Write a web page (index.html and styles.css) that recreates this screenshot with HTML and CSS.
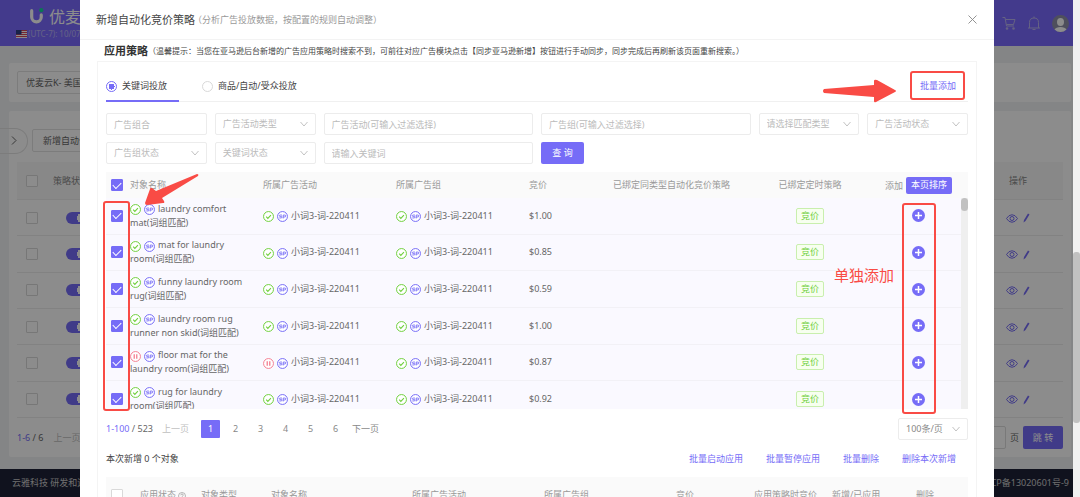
FILE: index.html
```html
<!DOCTYPE html>
<html lang="zh-CN">
<head>
<meta charset="utf-8">
<title>新增自动化竞价策略</title>
<link rel="stylesheet" href="styles.css">
</head>
<body>
<svg class="sprite" aria-hidden="true">
  <symbol id="ok" viewBox="0 0 20 20"><circle cx="10" cy="10" r="9" fill="#fff" stroke="#6fcf3c" stroke-width="1.8"/><path d="M5.8 10.2l3 3.2 5.6-6" fill="none" stroke="#6fcf3c" stroke-width="2"/></symbol>
  <symbol id="pause" viewBox="0 0 20 20"><circle cx="10" cy="10" r="9" fill="#fff" stroke="#f47f92" stroke-width="1.8"/><path d="M7.7 6v8M12.3 6v8" stroke="#f47f92" stroke-width="2.4"/></symbol>
  <symbol id="sp" viewBox="0 0 20 20"><circle cx="10" cy="10" r="9" fill="#fff" stroke="#766cf7" stroke-width="1.8"/><path d="M9 7.4H5.9q-1.6 0-1.6 1.3T6 10h1.400q1.600 0 1.600 1.300t-1.600 1.300H4.200M11.300 13.500V7.400h2.700q2 0 2 1.700t-2 1.700h-2.500" fill="none" stroke="#766cf7" stroke-width="1.700"/></symbol>
  <symbol id="plus" viewBox="0 0 26 26"><circle cx="13" cy="13" r="13" fill="#766cf7"/><path d="M13 6v14M6 13h14" stroke="#fff" stroke-width="3"/></symbol>
  <symbol id="down" viewBox="0 0 16 12"><path d="M1 2l7 8 7-8" fill="none" stroke="currentColor" stroke-width="1.800"/></symbol>
  <symbol id="eye" viewBox="0 0 24 18"><path d="M1 9q4.500-7.500 11-7.500T23 9q-4.500 7.500-11 7.500T1 9z" fill="none" stroke="currentColor" stroke-width="2"/><circle cx="12" cy="9" r="4" fill="none" stroke="currentColor" stroke-width="2"/></symbol>
  <symbol id="pen" viewBox="0 0 14 20"><path d="M10 1l3 2L5 16l-4 3 1-5z" fill="currentColor"/></symbol>
</svg>
<div class="viewport">
  <div class="page">
    <header class="topbar">
      <div class="brand">
        <div class="brand-row">
          <svg class="logo" viewBox="0 0 26 32"><path d="M3 5v12a9 9 0 0 0 18 0v-4" fill="none" stroke="#fff" stroke-width="6" stroke-linecap="round"/><circle cx="21" cy="4" r="4" fill="#14d79a"/></svg>
          <span class="brand-name">优麦云</span>
        </div>
        <div class="zone">
          <svg class="flag" viewBox="0 0 22 16"><path fill="#fff" d="M0 0h22v16H0z"/><path d="M0 1h22M0 5h22M0 9h22M0 13h22" stroke="#d8485a" stroke-width="2.400"/><path fill="#2d3f86" d="M0 0h11v9H0z"/></svg>
          <span>(UTC-7): 10/07</span>
        </div>
      </div>
      <div class="tools">
        <svg class="tool" viewBox="0 0 28 28"><path d="M1 3h5l3 17h15M7 7h19l-3 10H9" fill="none" stroke="currentColor" stroke-width="2"/><circle cx="10" cy="25" r="2.500" fill="currentColor"/><circle cx="23" cy="25" r="2.500" fill="currentColor"/></svg>
        <svg class="tool" viewBox="0 0 28 28"><path d="M14 1v3M2 24h24M5 24V13q0-9 9-9t9 9v11M11 27h6" fill="none" stroke="currentColor" stroke-width="2"/></svg>
        <svg class="avatar" viewBox="0 0 34 34"><circle cx="17" cy="17" r="17" fill="#8f91a8"/><ellipse cx="17" cy="14" rx="7" ry="8" fill="#fff"/><path d="M5 29q3-5 12-5t12 5q-5 5-12 5T5 29z" fill="#fff"/></svg>
      </div>
    </header>
    <main class="content">
      <section class="card shop"><button class="shop-select">优麦云K- 美国</button></section>
      <section class="card list">
        <div class="list-tools"><button class="handle" aria-label="展开"><svg viewBox="0 0 12 20"><path d="M2 2l8 8-8 8" fill="none" stroke="currentColor" stroke-width="2"/></svg></button><button class="plain">新增自动化策略</button></div>
        <table class="back-table">
          <thead><tr><th class="pick"><input type="checkbox" aria-label="全选策略"></th><th>策略状态</th><th class="ops">操作</th></tr></thead>
          <tbody>
            <tr><td class="pick"><input type="checkbox" aria-label="策略1"></td><td><span class="switch"></span></td><td class="ops"><svg class="eye"><use href="#eye"/></svg><svg class="pen"><use href="#pen"/></svg></td></tr>
            <tr><td class="pick"><input type="checkbox" aria-label="策略2"></td><td><span class="switch"></span></td><td class="ops"><svg class="eye"><use href="#eye"/></svg><svg class="pen"><use href="#pen"/></svg></td></tr>
            <tr><td class="pick"><input type="checkbox" aria-label="策略3"></td><td><span class="switch"></span></td><td class="ops"><svg class="eye"><use href="#eye"/></svg><svg class="pen"><use href="#pen"/></svg></td></tr>
            <tr><td class="pick"><input type="checkbox" aria-label="策略4"></td><td><span class="switch"></span></td><td class="ops"><svg class="eye"><use href="#eye"/></svg><svg class="pen"><use href="#pen"/></svg></td></tr>
            <tr><td class="pick"><input type="checkbox" aria-label="策略5"></td><td><span class="switch"></span></td><td class="ops"><svg class="eye"><use href="#eye"/></svg><svg class="pen"><use href="#pen"/></svg></td></tr>
            <tr><td class="pick"><input type="checkbox" aria-label="策略6"></td><td><span class="switch"></span></td><td class="ops"><svg class="eye"><use href="#eye"/></svg><svg class="pen"><use href="#pen"/></svg></td></tr>
          </tbody>
        </table>
        <div class="back-pager"><span><b>1-6</b> / 6</span><span class="muted">上一页</span><label class="jump"><input type="text" aria-label="页码">页</label><button class="primary jump-btn">跳 转</button></div>
      </section>
    </main>
    <footer class="foot"><span>云雅科技 研发和运营</span><span>ICP备13020601号-9</span></footer>
  </div>

  <div class="mask">
    <div class="modal" role="dialog" aria-labelledby="dlg-title">
      <header class="modal-head">
        <h1 id="dlg-title">新增自动化竞价策略</h1><span class="sub">（分析广告投放数据，按配置的规则自动调整）</span>
        <button class="close" aria-label="关闭"><svg viewBox="0 0 18 18"><path d="M1 1l16 16M17 1L1 17" stroke="currentColor" stroke-width="1.800"/></svg></button>
      </header>
      <div class="tip"><h2>应用策略</h2><span>（温馨提示：当您在亚马逊后台新增的广告应用策略时搜索不到，可前往对应广告模块点击【同步亚马逊新增】按钮进行手动同步，同步完成后再刷新该页面重新搜索。）</span></div>
      <section class="panel">
        <div class="tabs">
          <label class="tab active"><input type="radio" name="kind" checked>关键词投放</label>
          <label class="tab"><input type="radio" name="kind">商品/自动/受众投放</label>
          <button class="link batch">批量添加</button>
        </div>
        <form class="filters">
          <input class="field" type="text" placeholder="广告组合" aria-label="广告组合">
          <label class="pickbox"><select aria-label="广告活动类型"><option>广告活动类型</option></select><svg><use href="#down"/></svg></label>
          <input class="field wide" type="text" placeholder="广告活动(可输入过滤选择)" aria-label="广告活动">
          <input class="field wide" type="text" placeholder="广告组(可输入过滤选择)" aria-label="广告组">
          <label class="pickbox"><select aria-label="匹配类型"><option>请选择匹配类型</option></select><svg><use href="#down"/></svg></label>
          <label class="pickbox"><select aria-label="广告活动状态"><option>广告活动状态</option></select><svg><use href="#down"/></svg></label>
          <label class="pickbox"><select aria-label="广告组状态"><option>广告组状态</option></select><svg><use href="#down"/></svg></label>
          <label class="pickbox"><select aria-label="关键词状态"><option>关键词状态</option></select><svg><use href="#down"/></svg></label>
          <input class="field wide" type="text" placeholder="请输入关键词" aria-label="关键词">
          <button class="primary query" type="button">查 询</button>
        </form>

        <table class="grid grid-head">
          <colgroup><col class="c-pick"><col class="c-name"><col class="c-name"><col class="c-name"><col class="c-price"><col class="c-bound"><col class="c-timer"><col></colgroup>
          <thead><tr><th><input type="checkbox" checked aria-label="全选"></th><th>对象名称</th><th>所属广告活动</th><th>所属广告组</th><th>竞价</th><th>已绑定同类型自动化竞价策略</th><th class="mid">已绑定定时策略</th><th class="mid last"><span>添加</span><button class="primary sort">本页排序</button></th></tr></thead>
        </table>
        <div class="scroll">
          <table class="grid grid-body">
            <colgroup><col class="c-pick"><col class="c-name"><col class="c-name"><col class="c-name"><col class="c-price"><col class="c-bound"><col class="c-timer"><col></colgroup>
            <tbody>
              <tr><td><input type="checkbox" checked aria-label="laundry comfort mat"></td><td><svg class="ic"><use href="#ok"/></svg><svg class="ic"><use href="#sp"/></svg>laundry comfort<br>mat(词组匹配)</td><td><svg class="ic"><use href="#ok"/></svg><svg class="ic"><use href="#sp"/></svg>小词3-词-220411</td><td><svg class="ic"><use href="#ok"/></svg><svg class="ic"><use href="#sp"/></svg>小词3-词-220411</td><td>$1.00</td><td></td><td class="mid"><span class="tag">竞价</span></td><td class="mid"><button class="add" aria-label="添加"><svg><use href="#plus"/></svg></button></td></tr>
              <tr><td><input type="checkbox" checked aria-label="mat for laundry room"></td><td><svg class="ic"><use href="#ok"/></svg><svg class="ic"><use href="#sp"/></svg>mat for laundry<br>room(词组匹配)</td><td><svg class="ic"><use href="#ok"/></svg><svg class="ic"><use href="#sp"/></svg>小词3-词-220411</td><td><svg class="ic"><use href="#ok"/></svg><svg class="ic"><use href="#sp"/></svg>小词3-词-220411</td><td>$0.85</td><td></td><td class="mid"><span class="tag">竞价</span></td><td class="mid"><button class="add" aria-label="添加"><svg><use href="#plus"/></svg></button></td></tr>
              <tr><td><input type="checkbox" checked aria-label="funny laundry room rug"></td><td><svg class="ic"><use href="#ok"/></svg><svg class="ic"><use href="#sp"/></svg>funny laundry room<br>rug(词组匹配)</td><td><svg class="ic"><use href="#ok"/></svg><svg class="ic"><use href="#sp"/></svg>小词3-词-220411</td><td><svg class="ic"><use href="#ok"/></svg><svg class="ic"><use href="#sp"/></svg>小词3-词-220411</td><td>$0.59</td><td></td><td class="mid"><span class="tag">竞价</span></td><td class="mid"><button class="add" aria-label="添加"><svg><use href="#plus"/></svg></button></td></tr>
              <tr><td><input type="checkbox" checked aria-label="laundry room rug runner non skid"></td><td><svg class="ic"><use href="#ok"/></svg><svg class="ic"><use href="#sp"/></svg>laundry room rug<br>runner non skid(词组匹配)</td><td><svg class="ic"><use href="#ok"/></svg><svg class="ic"><use href="#sp"/></svg>小词3-词-220411</td><td><svg class="ic"><use href="#ok"/></svg><svg class="ic"><use href="#sp"/></svg>小词3-词-220411</td><td>$1.00</td><td></td><td class="mid"><span class="tag">竞价</span></td><td class="mid"><button class="add" aria-label="添加"><svg><use href="#plus"/></svg></button></td></tr>
              <tr><td><input type="checkbox" checked aria-label="floor mat for the laundry room"></td><td><svg class="ic"><use href="#pause"/></svg><svg class="ic"><use href="#sp"/></svg>floor mat for the<br>laundry room(词组匹配)</td><td><svg class="ic"><use href="#pause"/></svg><svg class="ic"><use href="#sp"/></svg>小词3-词-220411</td><td><svg class="ic"><use href="#ok"/></svg><svg class="ic"><use href="#sp"/></svg>小词3-词-220411</td><td>$0.87</td><td></td><td class="mid"><span class="tag">竞价</span></td><td class="mid"><button class="add" aria-label="添加"><svg><use href="#plus"/></svg></button></td></tr>
              <tr><td><input type="checkbox" checked aria-label="rug for laundry room"></td><td><svg class="ic"><use href="#ok"/></svg><svg class="ic"><use href="#sp"/></svg>rug for laundry<br>room(词组匹配)</td><td><svg class="ic"><use href="#ok"/></svg><svg class="ic"><use href="#sp"/></svg>小词3-词-220411</td><td><svg class="ic"><use href="#ok"/></svg><svg class="ic"><use href="#sp"/></svg>小词3-词-220411</td><td>$0.92</td><td></td><td class="mid"><span class="tag">竞价</span></td><td class="mid"><button class="add" aria-label="添加"><svg><use href="#plus"/></svg></button></td></tr>
            </tbody>
          </table>
          <div class="track"><div class="thumb"></div></div>
        </div>

        <nav class="pager" aria-label="分页">
          <span class="count"><b>1-100</b> / 523</span>
          <button class="step off">上一页</button>
          <div class="nums"><button class="num on">1</button><button class="num">2</button><button class="num">3</button><button class="num">4</button><button class="num">5</button><button class="num">6</button></div>
          <button class="step">下一页</button>
          <label class="pickbox size"><select aria-label="每页条数"><option>100条/页</option></select><svg><use href="#down"/></svg></label>
        </nav>
        <div class="actions">
          <span class="added">本次新增 0 个对象</span>
          <button class="link">批量启动应用</button><button class="link">批量暂停应用</button><button class="link">批量删除</button><button class="link">删除本次新增</button>
        </div>
        <table class="grid picked">
          <colgroup><col class="p-pick"><col class="p-state"><col class="p-type"><col class="p-name"><col class="p-camp"><col class="p-camp"><col class="p-bid"><col class="p-bid"><col class="p-new"><col></colgroup>
          <thead><tr><th><input type="checkbox" aria-label="全选已新增对象"></th><th>应用状态 <svg class="help" viewBox="0 0 16 16"><circle cx="8" cy="8" r="7" fill="none" stroke="currentColor" stroke-width="1.400"/><path d="M5.500 6.500q0-2.500 2.500-2.500t2.500 2.200q0 1.300-1.300 2-1.200.6-1.200 1.600M8 11v1.600" fill="none" stroke="currentColor" stroke-width="1.400"/></svg></th><th>对象类型</th><th>对象名称</th><th>所属广告活动</th><th>所属广告组</th><th>竞价</th><th>应用策略时竞价</th><th>新增/已应用</th><th>删除</th></tr></thead>
        </table>
      </section>

      <svg class="arrow arrow-batch" viewBox="0 0 74 24"><path d="M1 10l50-4V2q0-2 3-1l18 10q2 1 0 2L53 23q-2 1-2-1v-4L1 14q-2-2 0-4z" fill="#f94b45"/></svg>
      <svg class="arrow arrow-check" viewBox="0 0 56 34"><path d="M53 1L12 18 8 15q-1-1-2 1L1 30q0 2 2 2l16-2q2 0 1-2l-2-3L54 3q1-2-1-2z" fill="#f94b45"/></svg>
      <div class="mark mark-batch"></div>
      <div class="mark mark-check"></div>
      <div class="mark mark-add"></div>
      <div class="note">单独添加</div>
    </div>
  </div>
</div>
<div class="page-scroll"><div class="page-thumb"></div></div>
</body>
</html>
```
FILE: styles.css
```css
* { box-sizing: border-box; }
body {
  margin: 0;
  display: flex;
  height: 100vh;
  overflow: hidden;
  font: 9px/14px "Noto Sans", "Noto Sans CJK SC", sans-serif;
  color: #666;
}
button, input, select { font: inherit; color: inherit; margin: 0; padding: 0; border: 0; background: none; }
button { white-space: nowrap; }
b { font-weight: 400; color: #766cf7; }
table { border-collapse: separate; border-spacing: 0; }
th { font-weight: 400; text-align: left; }
th, td { padding: 0; vertical-align: middle; white-space: nowrap; }
svg { display: block; }
.sprite { position: absolute; width: 0; height: 0; }
.viewport { position: relative; flex: 1; min-width: 0; overflow: hidden; }

input[type="checkbox"] {
  appearance: none;
  display: grid;
  place-items: center;
  width: 12px;
  height: 12px;
  border: 1px solid #d9d9d9;
  border-radius: 1px;
  background: #fff;
}
input[type="checkbox"]:checked { background: #766cf7; border-color: #766cf7; }
input[type="checkbox"]:checked::after {
  content: "";
  width: 7px;
  height: 4px;
  margin-bottom: 2px;
  border: solid #fff;
  border-width: 0 0 1px 1px;
  transform: rotate(-45deg);
}
.primary { background: #766cf7; color: #fff; border-radius: 2px; }
.link { color: #766cf7; }

/* page behind the dialog */
.page { display: flex; flex-direction: column; min-height: 100%; background: #f0f2f5; }
.topbar { display: flex; justify-content: space-between; height: 46px; padding: 8px 4px 0 16px; background: #7b6bff; color: #fff; }
.brand-row { display: flex; align-items: center; gap: 5px; height: 17px; padding-left: 14px; }
.logo { width: 14px; height: 17px; }
.brand-name { font-size: 16px; white-space: nowrap; }
.zone { display: flex; align-items: center; gap: 1px; margin-top: 2px; font-size: 8px; color: #b9b2f5; white-space: nowrap; }
.flag { width: 11px; height: 8px; }
.tools { display: flex; align-items: center; gap: 11px; height: 30px; color: #b9b3ee; }
.tool { width: 14px; height: 14px; }
.avatar { width: 17px; height: 17px; }
.content { display: flex; flex-direction: column; gap: 9px; padding: 17px 2px 12px 9px; }
.card { background: #fff; border-radius: 2px; padding: 8px; }
.shop-select { height: 23px; width: 120px; padding-left: 8px; text-align: left; border: 1px solid #e2e2e2; border-radius: 2px; }
.list-tools { display: flex; align-items: center; gap: 4px; margin: 8px 0 8px -17px; height: 27px; }
.handle { display: grid; place-items: center; width: 28px; height: 26px; border: 1px solid #e2e2e2; border-left: 0; border-radius: 0 13px 13px 0; }
.handle svg { width: 6px; height: 11px; }
.plain { height: 23px; padding: 0 10px; border: 1px solid #e2e2e2; border-radius: 2px; }
.back-table { width: 100%; height: 256px; }
.back-table th { height: 38px; background: #f7f7f7; color: #888; border-bottom: 1px solid #ededed; }
.back-table td { border-bottom: 1px solid #ededed; }
.back-table tbody { color: #766cf7; }
.back-table .pick { width: 36px; padding-left: 9px; }
.back-table .ops { width: 64px; padding-left: 7px; }
.back-table th.ops { padding-left: 10px; }
.back-table td:nth-child(2) { padding-left: 13px; }
.switch { display: block; width: 23px; height: 12px; border-radius: 6px; background: radial-gradient(circle at 16px 6px, #fff 5px, #766cf7 5px); }
.eye, .pen { display: inline-block; vertical-align: middle; }
.eye { width: 12px; height: 9px; }
.pen { width: 7px; height: 10px; margin-left: 5px; }
.back-pager { display: flex; align-items: center; gap: 10px; padding: 8px 0 0; }
.muted { color: #bfbfbf; }
.jump { display: flex; align-items: center; gap: 4px; margin-left: auto; }
.jump input { width: 30px; height: 23px; border: 1px solid #ddd; border-radius: 2px; }
.jump-btn { width: 40px; height: 23px; margin-left: -6px; }
.foot { display: flex; flex: 1; justify-content: space-between; padding: 7px 4px 7px 12px; background: #1e2238; color: #c8c8c8; }

/* dialog */
.mask { position: absolute; inset: 0; padding: 0 79px 0 80px; background: rgba(0, 0, 0, 0.45); }
.modal { position: relative; height: 100%; overflow: hidden; background: #fff; }
.modal-head { display: flex; align-items: center; height: 40px; padding: 0 17px 0 16px; border-bottom: 1px solid #f3f3f3; }
h1, h2 { margin: 0; line-height: 16px; white-space: nowrap; }
h1 { font-size: 11px; font-weight: 400; color: #444; }
.sub { color: #999; white-space: nowrap; margin-left: -2px; }
.close { margin-left: auto; color: #888; }
.close svg { width: 9px; height: 9px; }
.tip { display: flex; align-items: center; height: 21px; padding: 0 24px; font-size: 8px; color: #444; white-space: nowrap; }
h2 { font-size: 11px; font-weight: 700; color: #333; }
.panel { margin: 0 17px; padding: 0 8px; border: 1px solid #f4f4f4; }
.tabs { display: flex; height: 40px; align-items: stretch; gap: 23px; border-bottom: 1px solid #f0f0f0; color: #444; }
.tab { display: flex; align-items: center; gap: 5px; padding: 10px 12px 0 0; height: 40px; border-bottom: 2px solid transparent; }
.tab.active { border-color: #766cf7; }
.tab input {
  appearance: none;
  width: 11px;
  height: 11px;
  border: 1px solid #d9d9d9;
  border-radius: 50%;
  background: #fff;
}
.tab input:checked { border-color: #766cf7; background: radial-gradient(circle, #766cf7 3px, #fff 3px); }
.batch { margin-left: auto; padding: 9px 12px 0 0; }
.filters { display: grid; grid-template-columns: repeat(8, 1fr); gap: 7px 8px; margin: 11px 0 8px; color: #bbb; }
.field, .pickbox { min-width: 0; height: 22px; border: 1px solid #ececec; border-radius: 2px; }
.field { padding: 0 7px; }
.field::placeholder { color: #bbb; opacity: 1; }
.wide { grid-column: span 2; }
.pickbox { display: flex; align-items: center; padding: 0 7px; }
.pickbox select { appearance: none; flex: 1; min-width: 0; height: 20px; }
.pickbox svg { width: 8px; height: 6px; }
.query { width: 43px; height: 22px; }

.grid { width: 100%; table-layout: fixed; }
.grid th { background: #fafafa; color: #999; }
.grid .mid { text-align: center; }
.grid input { margin-left: 5px; }
.grid-head th { height: 26px; }
.grid-head .last { padding-right: 7px; }
.sort { height: 17px; padding: 0 5px; margin-left: 3px; }
.c-pick { width: 24px; }
.c-name { width: 133px; }
.c-price { width: 84px; }
.c-bound { width: 131px; }
.c-timer { width: 132px; }
.scroll { display: flex; height: 211px; overflow: hidden; }
.grid-body { flex: 1; width: auto; height: 220px; }
.grid-body td { background: #faf9ff; border-bottom: 1px solid #f2f1f6; }
.ic { display: inline-block; width: 11px; height: 11px; margin-right: 3px; vertical-align: middle; }
.tag { display: inline-block; padding: 0 4px; border: 1px solid #c9efae; border-radius: 2px; background: #f7ffef; color: #6fcf3c; }
.add svg { width: 13px; height: 13px; }
.add { display: block; margin: 0 auto; }
.track { width: 7px; background: #efefef; }
.thumb { height: 13px; border-radius: 4px; background: #c1c1c1; }

.pager { display: flex; align-items: center; gap: 9px; margin-top: 9px; }
.step { color: #888; }
.off { color: #bfbfbf; }
.nums { display: flex; gap: 6px; margin: 0 -2px 0 3px; }
.num { width: 19px; height: 18px; color: #888; }
.num.on { background: #766cf7; color: #fff; border-radius: 1px; }
.size { width: 70px; margin-left: auto; color: #888; }
.size svg { color: #bbb; }
.actions { display: flex; align-items: center; gap: 23px; margin: 12px 0 11px; padding-right: 12px; }
.added { margin-right: auto; color: #444; }
.picked th { height: 36px; }
.help { display: inline-block; width: 8px; height: 8px; vertical-align: middle; }
.p-pick { width: 34px; }
.p-state { width: 61px; }
.p-type { width: 70px; }
.p-name { width: 141px; }
.p-camp { width: 132px; }
.p-bid { width: 78px; }
.p-new { width: 84px; }

/* callouts drawn over the dialog */
.arrow, .mark, .note { position: absolute; pointer-events: none; }
.mark { border: 2px solid #f94b45; border-radius: 3px; }
.arrow-batch { right: 97px; top: 79px; width: 74px; height: 24px; }
.arrow-check { left: 64px; top: 173px; width: 56px; height: 34px; }
.mark-batch { right: 29px; top: 71px; width: 55px; height: 29px; }
.mark-check { left: 23px; top: 201px; width: 27px; height: 210px; }
.mark-add { right: 58px; top: 203px; width: 34px; height: 211px; }
.note { right: 100px; top: 266px; font-size: 15px; line-height: 18px; color: #f94b45; }

.page-scroll { width: 7px; padding-top: 252px; background: #f1f1f1; }
.page-thumb { height: 171px; border-radius: 3px; background: #c1c1c1; }
```
